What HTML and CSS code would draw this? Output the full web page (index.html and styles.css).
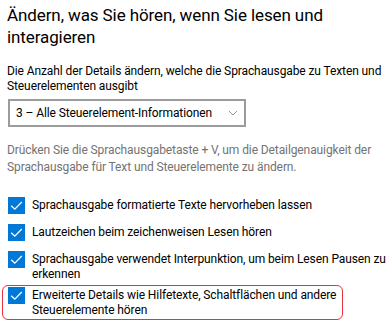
FILE: index.html
```html
<!DOCTYPE html>
<html lang="de">
<head>
<meta charset="utf-8">
<link rel="stylesheet" href="styles.css">
</head>
<body>
<div class="page">
  <h1 class="title">Ändern, was Sie hören, wenn Sie lesen und interagieren</h1>
  <p class="desc">Die Anzahl der Details ändern, welche die Sprachausgabe zu Texten und Steuerelementen ausgibt</p>
  <div class="select">
    <span class="select-text">3 – Alle Steuerelement-Informationen</span>
    <svg class="chev" width="10" height="6" viewBox="0 0 10 6"><path d="M1 1 L5 5 L9 1" fill="none" stroke="#8f8f8f" stroke-width="0.9"/></svg>
  </div>
  <p class="hint">Drücken Sie die Sprachausgabetaste + V, um die Detailgenauigkeit der Sprachausgabe für Text und Steuerelemente zu ändern.</p>
  <ul class="checks">
    <li class="check"><span class="box"><svg viewBox="0 0 17 17" width="17" height="17"><path d="M3.2 8.8 L6.8 12.2 L13.8 5" fill="none" stroke="#fff" stroke-width="1.3"/></svg></span><span class="label">Sprachausgabe formatierte Texte hervorheben lassen</span></li>
    <li class="check"><span class="box"><svg viewBox="0 0 17 17" width="17" height="17"><path d="M3.2 8.8 L6.8 12.2 L13.8 5" fill="none" stroke="#fff" stroke-width="1.3"/></svg></span><span class="label">Lautzeichen beim zeichenweisen Lesen hören</span></li>
    <li class="check"><span class="box"><svg viewBox="0 0 17 17" width="17" height="17"><path d="M3.2 8.8 L6.8 12.2 L13.8 5" fill="none" stroke="#fff" stroke-width="1.3"/></svg></span><span class="label">Sprachausgabe verwendet Interpunktion, um beim Lesen Pausen zu erkennen</span></li>
    <li class="check highlight"><span class="box"><svg viewBox="0 0 17 17" width="17" height="17"><path d="M3.2 8.8 L6.8 12.2 L13.8 5" fill="none" stroke="#fff" stroke-width="1.3"/></svg></span><span class="label">Erweiterte Details wie Hilfetexte, Schaltflächen und andere Steuerelemente hören</span></li>
  </ul>
</div>
</body>
</html>
```
FILE: styles.css
```css
html, body {
  margin: 0;
  padding: 0;
  background: #fff;
}
body {
  font-family: Roboto, "Noto Sans", sans-serif;
  color: #000;
  width: 390px;
  height: 325px;
  overflow: hidden;
}
.page {
  padding: 0 0 0 7px;
}
.title {
  margin: 0;
  padding-top: 3.7px;
  font-size: 17px;
  font-weight: 400;
  line-height: 22px;
  letter-spacing: -0.1px;
  width: 360px;
  color: #000;
}
.desc {
  margin: 16.7px 0 0 0;
  font-size: 12px;
  line-height: 15px;
  letter-spacing: -0.1px;
}
.select {
  margin: 4.6px 0 0 1px;
  height: 24px;
  width: 222px;
  border: 2px solid #9c9c9c;
  display: flex;
  align-items: center;
  justify-content: space-between;
  padding: 0 6px 0 6px;
}
.select-text {
  font-size: 12px;
  letter-spacing: -0.1px;
  padding-top: 1px;
}
.chev {
  display: block;
  margin-top: 1px;
}
.hint {
  margin: 15.4px 0 0 0;
  font-size: 12px;
  line-height: 17px;
  color: #737373;
  letter-spacing: -0.1px;
}
.checks {
  list-style: none;
  margin: 21.8px 0 0 0;
  padding: 0;
  display: flex;
  flex-direction: column;
  gap: 6px;
}
.check {
  display: flex;
  align-items: flex-start;
  min-height: 21px;
  font-size: 12px;
  line-height: 15px;
  letter-spacing: -0.1px;
}
.box {
  flex: none;
  width: 17px;
  height: 17px;
  background: #0078d7;
  margin: -1px 7px 0 1px;
  display: block;
}
.box svg {
  display: block;
}
.highlight {
  position: relative;
}
.highlight::after {
  content: "";
  position: absolute;
  left: -5px;
  top: -3px;
  width: 339px;
  height: 33px;
  border: 1px solid #e8323c;
  border-radius: 6px;
}
```
